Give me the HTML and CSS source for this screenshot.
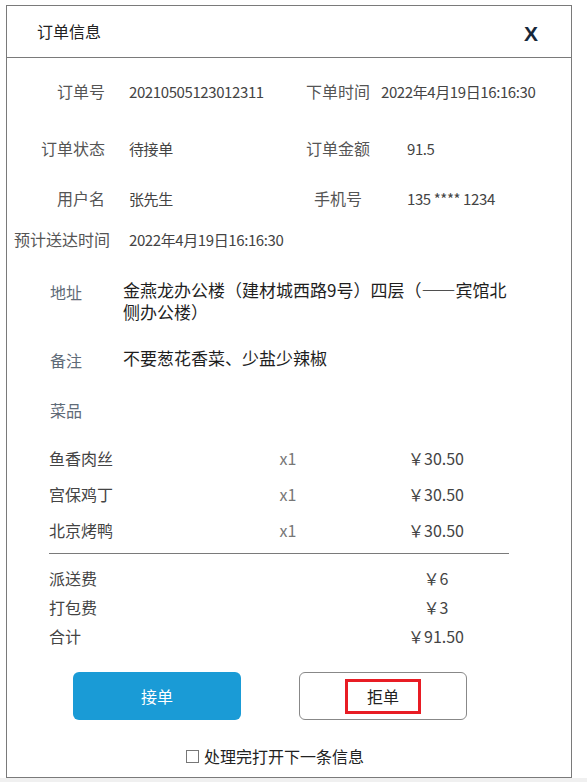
FILE: index.html
```html
<!DOCTYPE html>
<html lang="zh-CN">

<head>
    <meta charset="UTF-8">
    <meta name="viewport" content="width=device-width, initial-scale=1.0">
    <title>订单信息</title>
    <link rel="stylesheet" href="styles.css">
</head>

<body>
    <div class="page">
        <div class="dialog">
            <div class="dialog-header">
                <span class="dialog-title">订单信息</span>
                <span class="close">X</span>
            </div>

            <div class="info">
                <span class="label">订单号</span>
                <span class="value">20210505123012311</span>
                <span class="label2">下单时间</span>
                <span class="value">2022年4月19日16:16:30</span>

                <span class="label">订单状态</span>
                <span class="value">待接单</span>
                <span class="label2">订单金额</span>
                <span class="value indent">91.5</span>

                <span class="label">用户名</span>
                <span class="value">张先生</span>
                <span class="label2">手机号</span>
                <span class="value indent">135 **** 1234</span>

                <span class="label wide">预计送达时间</span>
                <span class="value">2022年4月19日16:16:30</span>
            </div>

            <div class="detail address">
                <span class="detail-label">地址</span>
                <span class="detail-value">金燕龙办公楼（建材城西路9号）四层（——宾馆北侧办公楼）</span>
            </div>
            <div class="detail remark">
                <span class="detail-label">备注</span>
                <span class="detail-value">不要葱花香菜、少盐少辣椒</span>
            </div>
            <div class="detail dishes-title">
                <span class="detail-label">菜品</span>
            </div>

            <div class="dishes">
                <div class="dish">
                    <span>鱼香肉丝</span>
                    <span class="qty">x1</span>
                    <span class="price">￥30.50</span>
                </div>
                <div class="dish">
                    <span>宫保鸡丁</span>
                    <span class="qty">x1</span>
                    <span class="price">￥30.50</span>
                </div>
                <div class="dish">
                    <span>北京烤鸭</span>
                    <span class="qty">x1</span>
                    <span class="price">￥30.50</span>
                </div>
            </div>
            <hr class="divider">
            <div class="fees">
                <div class="fee">
                    <span>派送费</span>
                    <span></span>
                    <span class="price">￥6</span>
                </div>
                <div class="fee">
                    <span>打包费</span>
                    <span></span>
                    <span class="price">￥3</span>
                </div>
                <div class="fee">
                    <span>合计</span>
                    <span></span>
                    <span class="price">￥91.50</span>
                </div>
            </div>

            <div class="actions">
                <button class="btn btn-accept">接单</button>
                <button class="btn btn-reject"><span class="mark">拒单</span></button>
            </div>

            <label class="next">
                <span class="box"></span>处理完打开下一条信息
            </label>
        </div>
    </div>
</body>

</html>
```

FILE: styles.css
```css
html {
    background-color: #f0f0f0;
}

body {
    margin: 0;
    padding: 0;
    font-family: "Noto Sans CJK SC", "Noto Sans", sans-serif;
    color: #333;
}

.page {
    background-color: #fff;
    padding: 5px 15px 0 6px;
}

.dialog {
    border: 1px solid #7a7a7a;
    padding-bottom: 11px;
}

.dialog-header {
    height: 51px;
    border-bottom: 1px solid #7a7a7a;
    display: flex;
    align-items: center;
    justify-content: space-between;
    padding: 0 33px 0 30px;
}

.dialog-title {
    font-size: 16px;
    color: #222;
    margin-top: -2px;
}

.close {
    font-family: "Liberation Sans", Arial, sans-serif;
    font-weight: bold;
    font-size: 21px;
    color: #17283a;
    margin-top: 4px;
}

/* top info table */
.info {
    display: grid;
    grid-template-columns: 98px 198px 70px 1fr;
    grid-template-rows: 50px 64px 36px 46px;
    padding-top: 8px;
    font-size: 16px;
    align-items: center;
}

.info .label {
    text-align: right;
    color: #555;
}

.info .label.wide {
    white-space: nowrap;
    justify-self: end;
    margin-right: -5px;
}

.info .label2 {
    text-align: center;
    color: #555;
}

.info .value {
    color: #444;
    padding-left: 24px;
    font-size: 15px;
    letter-spacing: -0.4px;
    white-space: nowrap;
}

.info .label2 + .value {
    padding-left: 8px;
}

.info .label2 + .value.indent {
    padding-left: 34px;
}

/* address, remark */
.detail {
    display: grid;
    grid-template-columns: 73px 392px;
    padding-left: 43px;
    align-items: start;
}

.detail-label {
    font-size: 16px;
    line-height: 22px;
    padding-top: 2px;
    color: #5f6b78;
}

.detail-value {
    font-size: 17px;
    line-height: 22px;
    color: #1e1e1e;
}

.address {
    margin-top: 17px;
}

.remark {
    margin-top: 24px;
}

.dishes-title {
    margin-top: 26px;
}

/* dishes */
.dishes {
    margin-top: 19px;
}

.dishes,
.fees,
.divider {
    margin-left: 42px;
    margin-right: 62px;
}

.dish,
.fee {
    display: grid;
    grid-template-columns: 1fr 80px 140px;
    column-gap: 38px;
    padding-right: 3px;
    align-items: center;
    font-size: 16px;
    color: #444;
}

.dish {
    height: 36px;
}

.fee {
    height: 29px;
}

.qty {
    text-align: center;
    color: #777;
}

.price {
    text-align: center;
    color: #444;
}

.divider {
    border: none;
    border-top: 1px solid #7a7a7a;
    margin-top: 5px;
    margin-bottom: 0;
}

.fees {
    margin-top: 9px;
}

/* buttons */
.actions {
    display: flex;
    gap: 58px;
    padding-left: 66px;
    margin-top: 22px;
}

.btn {
    width: 168px;
    height: 48px;
    border-radius: 6px;
    font-family: inherit;
    font-size: 16px;
    padding: 0;
    display: flex;
    align-items: center;
    justify-content: center;
}

.btn-accept {
    background-color: #1a9bd6;
    border: none;
    color: #fff;
}

.btn-reject {
    background-color: #fff;
    border: 1px solid #888;
    color: #222;
}

.mark {
    box-sizing: border-box;
    width: 76px;
    height: 35px;
    border: 3px solid #e81c24;
    display: flex;
    align-items: center;
    justify-content: center;
}

.next {
    display: flex;
    align-items: center;
    justify-content: center;
    gap: 5px;
    margin-top: 26px;
    padding-right: 28px;
    font-size: 16px;
    line-height: 20px;
    color: #222;
}

.box {
    box-sizing: border-box;
    width: 13px;
    height: 13px;
    border: 1px solid #777;
    background: #fff;
}
```
